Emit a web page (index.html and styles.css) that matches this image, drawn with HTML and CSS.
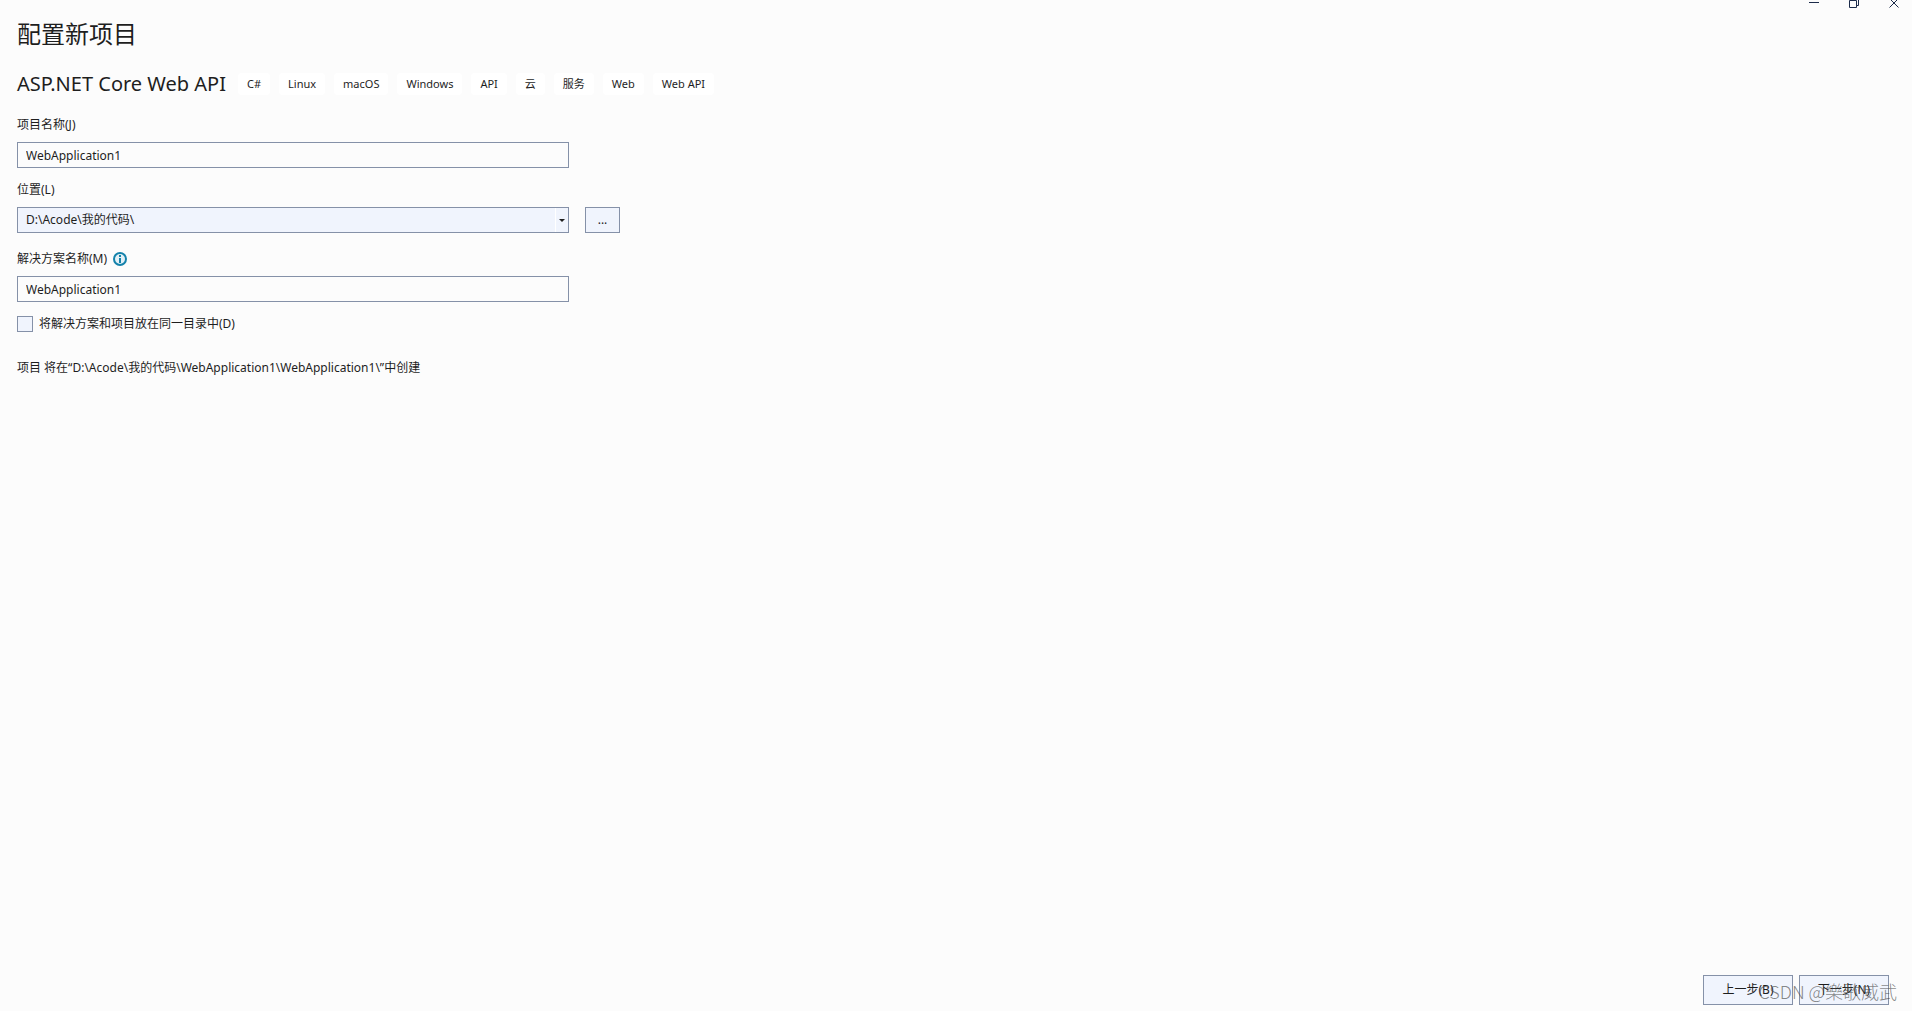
FILE: index.html
```html
<!DOCTYPE html>
<html lang="zh-CN">
<head>
    <meta charset="UTF-8">
    <meta name="viewport" content="width=device-width, initial-scale=1.0">
    <title>配置新项目</title>
    <link rel="stylesheet" href="styles.css">
</head>
<body>
    <div class="window-controls">
        <button type="button" aria-label="最小化">
            <svg width="12" height="12" viewBox="0 0 12 12"><path d="M1 5.5h10" /></svg>
        </button>
        <button type="button" aria-label="还原">
            <svg width="12" height="12" viewBox="0 0 12 12"><path d="M1.5 3.5h7v7h-7zM3.5 3.5v-2h7v7h-2" /></svg>
        </button>
        <button type="button" aria-label="关闭">
            <svg width="12" height="12" viewBox="0 0 12 12"><path d="M1.5 1.5l9 9M10.5 1.5l-9 9" /></svg>
        </button>
    </div>

    <main class="content">
        <h1 class="title">配置新项目</h1>

        <div class="template">
            <h2 class="template-name">ASP.NET Core Web API</h2>
            <ul class="tags">
                <li>C#</li>
                <li>Linux</li>
                <li>macOS</li>
                <li>Windows</li>
                <li>API</li>
                <li>云</li>
                <li>服务</li>
                <li>Web</li>
                <li>Web API</li>
            </ul>
        </div>

        <form class="form" id="project-form">
            <div class="field">
                <label for="project-name">项目名称(J)</label>
                <input class="text-box" type="text" id="project-name" value="WebApplication1">
            </div>

            <div class="field">
                <label for="location">位置(L)</label>
                <div class="location-row">
                    <div class="combo">
                        <select class="text-box" id="location">
                            <option>D:\Acode\我的代码\</option>
                        </select>
                        <svg class="combo-arrow" width="6" height="3" viewBox="0 0 6 3"><path d="M0 0h6l-3 3z" /></svg>
                    </div>
                    <button class="btn browse" type="button">...</button>
                </div>
            </div>

            <div class="field solution">
                <div class="label-row">
                    <label for="solution-name">解决方案名称(M)</label>
                    <svg class="info" width="14" height="14" viewBox="0 0 14 14">
                        <circle cx="7" cy="7" r="6" />
                        <path d="M7 6v5M7 3v2" />
                    </svg>
                </div>
                <input class="text-box" type="text" id="solution-name" value="WebApplication1">
            </div>

            <div class="check">
                <input type="checkbox" id="same-dir">
                <label for="same-dir">将解决方案和项目放在同一目录中(D)</label>
            </div>

            <p class="path">项目 将在“D:\Acode\我的代码\WebApplication1\WebApplication1\”中创建</p>
        </form>
    </main>

    <footer class="footer">
        <button class="btn" type="button">上一步(B)</button>
        <button class="btn" type="submit" form="project-form">下一步(N)</button>
        <span class="watermark">CSDN @樂歌威武</span>
    </footer>
</body>
</html>
```
FILE: styles.css
```css
* {
  box-sizing: border-box;
}

body {
  margin: 0;
  min-height: 100vh;
  display: flex;
  flex-direction: column;
  position: relative;
  background-color: #fcfcfc;
  color: #1e1e1e;
  font-family: "Noto Sans", "Noto Sans CJK SC", sans-serif;
  font-size: 12px;
  line-height: 18px;
}

button, input, select {
  font: inherit;
  color: inherit;
}

/* title bar buttons */
.window-controls {
  position: absolute;
  top: -3px;
  right: 12px;
  display: flex;
  gap: 28px;
}

.window-controls button {
  width: 12px;
  height: 12px;
  padding: 0;
  border: none;
  background: none;
}

.window-controls svg {
  display: block;
  fill: none;
  stroke: #1c2b4a;
}

.content {
  flex: 1;
  padding: 16px 17px;
}

.title {
  margin: 0;
  font-size: 24px;
  line-height: 36px;
  font-weight: normal;
}

.template {
  display: flex;
  align-items: center;
  gap: 12px;
  margin-top: 18px;
}

.template-name {
  margin: 0;
  font-size: 20px;
  line-height: 28px;
  font-weight: normal;
}

.tags {
  display: flex;
  gap: 9px;
  margin: 0;
  padding: 0;
  list-style: none;
}

.tags li {
  padding: 0 9px;
  border-radius: 4px;
  background-color: #fff;
  font-size: 11px;
  line-height: 22px;
}

.form {
  width: 552px;
  margin-top: 18px;
}

.field {
  display: flex;
  flex-direction: column;
  gap: 8px;
  margin-bottom: 13px;
}

.solution {
  margin-top: 17px;
}

.text-box {
  width: 100%;
  height: 26px;
  padding: 0 8px;
  border: 1px solid #8591a8;
  border-radius: 0;
  background-color: #fcfcfc;
}

.location-row {
  display: flex;
  gap: 16px;
}

.combo {
  position: relative;
  flex: none;
  width: 100%;
}

.combo select {
  display: block;
  appearance: none;
  background: linear-gradient(#fff, #fff) right 12px top / 1px 100% no-repeat #f0f4fd;
}

.combo-arrow {
  position: absolute;
  top: 12px;
  right: 4px;
  fill: #1e1e1e;
  pointer-events: none;
}

.btn {
  width: 90px;
  height: 30px;
  padding: 0;
  border: 1px solid #8591a8;
  background-color: #f0f4fd;
}

.browse {
  flex: none;
  width: 35px;
  height: 26px;
}

.label-row {
  display: flex;
  align-items: center;
  gap: 6px;
}

.info {
  fill: #e3f0f6;
  stroke: #1482ab;
  stroke-width: 2;
}

.check {
  display: flex;
  align-items: center;
  gap: 6px;
  margin-top: 13px;
}

.check input {
  appearance: none;
  width: 16px;
  height: 16px;
  margin: 0;
  border: 1px solid #8591a8;
  background-color: #f0f4fd;
}

.path {
  margin: 26px 0 0;
}

.footer {
  display: flex;
  justify-content: flex-end;
  gap: 6px;
  padding: 0 23px 6px;
  position: relative;
}

.watermark {
  position: absolute;
  right: 15px;
  bottom: 8px;
  color: rgba(70, 70, 70, 0.65);
  font-family: "Noto Sans CJK SC", sans-serif;
  font-size: 18px;
  font-weight: 300;
  line-height: 24px;
  pointer-events: none;
}
```
